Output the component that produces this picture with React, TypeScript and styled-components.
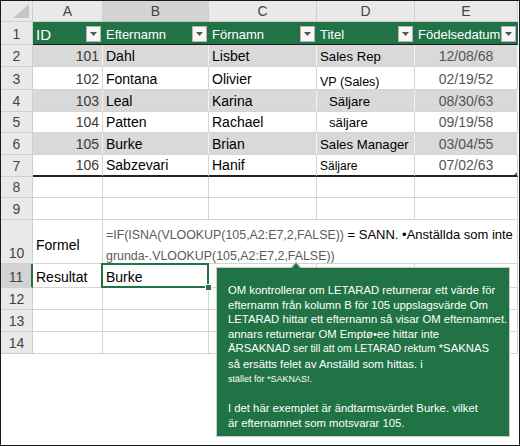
import React from "react";
import styled, { createGlobalStyle } from "styled-components";

const GlobalStyle = createGlobalStyle`
  html, body {
    margin: 0;
    padding: 0;
    background: #fff;
  }
  body {
    font-family: "Liberation Sans", Arial, sans-serif;
  }
`;

const GREEN = "#217346";
const GRID = "#d4d4d4";

const COLUMNS = ["A", "B", "C", "D", "E"];
const ROW_HEIGHTS = [21, 23, 22, 23, 22, 21, 22, 22, 21, 22, 44, 24, 22, 22, 22];

type Person = {
  id: number;
  last: string;
  first: string;
  title: string;
  titleStyle?: "indent" | "small" | "boxed";
  date: string;
};

const people: Person[] = [
  { id: 101, last: "Dahl", first: "Lisbet", title: "Sales Rep", date: "12/08/68" },
  { id: 102, last: "Fontana", first: "Olivier", title: "VP (Sales)", titleStyle: "small", date: "02/19/52" },
  { id: 103, last: "Leal", first: "Karina", title: "Säljare", titleStyle: "indent", date: "08/30/63" },
  { id: 104, last: "Patten", first: "Rachael", title: "säljare", titleStyle: "indent", date: "09/19/58" },
  { id: 105, last: "Burke", first: "Brian", title: "Sales Manager", date: "03/04/55" },
  { id: 106, last: "Sabzevari", first: "Hanif", title: "Säljare", titleStyle: "boxed", date: "07/02/63" },
];

const App = () => {
  return (
    <>
      <GlobalStyle />
      <Frame>
        <Sheet>
          <Corner>
            <svg width="16" height="14" viewBox="0 0 16 14">
              <polygon points="0,14 16,14 16,0" fill="#c6c6c6" />
            </svg>
          </Corner>
          {COLUMNS.map((c) => (
            <ColHead key={c} $selected={c === "B"}>
              {c}
            </ColHead>
          ))}

          <RowHead>1</RowHead>
          {["ID", "Efternamn", "Förnamn", "Titel", "Födelsedatum"].map((h) => (
            <HeadCell key={h}>
              <HeadLabel $bold={h === "ID"}>{h}</HeadLabel>
              <FilterButton>
                <svg width="7" height="4" viewBox="0 0 7 4">
                  <polygon points="0,0 7,0 3.5,4" fill="#555" />
                </svg>
              </FilterButton>
            </HeadCell>
          ))}

          {people.map((p, i) => {
            const banded = i % 2 === 0;
            const last = i === people.length - 1;
            return (
              <React.Fragment key={p.id}>
                <RowHead>{i + 2}</RowHead>
                <Cell $banded={banded} $closing={last} $align="right" $color="#3a3a3a">
                  {p.id}
                </Cell>
                <Cell $banded={banded} $closing={last}>
                  {p.last}
                </Cell>
                <Cell $banded={banded} $closing={last}>
                  {p.first}
                </Cell>
                <Cell $banded={banded} $closing={last}>
                  <Title $variant={p.titleStyle}>{p.title}</Title>
                </Cell>
                <Cell $banded={banded} $closing={last} $align="center" $color="#555">
                  {p.date}
                  {last && <ResizeHandle />}
                </Cell>
              </React.Fragment>
            );
          })}

          {[8, 9].map((n) => (
            <React.Fragment key={n}>
              <RowHead>{n}</RowHead>
              {COLUMNS.map((c) => (
                <Cell key={c} />
              ))}
            </React.Fragment>
          ))}

          <RowHead>10</RowHead>
          <Cell $valign="center">Formel</Cell>
          <FormulaCell>
            <FormulaLine>
              <Code>=IF(ISNA(VLOOKUP(105,A2:E7,2,FALSE))</Code>
              <Plain> = SANN. •Anställda som inte</Plain>
            </FormulaLine>
            <FormulaLine>
              <Code>grunda-.VLOOKUP(105,A2:E7,2,FALSE))</Code>
            </FormulaLine>
          </FormulaCell>

          <RowHead $selected>11</RowHead>
          <Cell>Resultat</Cell>
          <Cell $active>Burke</Cell>
          <Cell />
          <Cell />
          <Cell />

          {[12, 13, 14].map((n) => (
            <React.Fragment key={n}>
              <RowHead>{n}</RowHead>
              {COLUMNS.map((c) => (
                <Cell key={c} />
              ))}
            </React.Fragment>
          ))}
        </Sheet>

        <Callout>
          <CalloutLine>OM kontrollerar om LETARAD returnerar ett värde för</CalloutLine>
          <CalloutLine>efternamn från kolumn B för 105 uppslagsvärde Om</CalloutLine>
          <CalloutLine>LETARAD hittar ett efternamn så visar OM efternamnet.</CalloutLine>
          <CalloutLine>annars returnerar OM Emptø•ee hittar inte</CalloutLine>
          <CalloutLine>
            ÄRSAKNAD <Small $size={10.3}>ser till att om LETARAD rektum</Small> *SAKNAS
          </CalloutLine>
          <CalloutLine>så ersätts felet av Anställd som hittas. i</CalloutLine>
          <CalloutLine>
            <Small $size={9}>stället för *SAKNAS!.</Small>
          </CalloutLine>
          <CalloutLine>&nbsp;</CalloutLine>
          <CalloutLine>I det här exemplet är ändtarmsvärdet Burke. vilket</CalloutLine>
          <CalloutLine>är efternamnet som motsvarar 105.</CalloutLine>
        </Callout>
      </Frame>
    </>
  );
};

const Frame = styled.div`
  position: relative;
  width: 520px;
  height: 446px;
  box-sizing: border-box;
  border: 1px solid #1a1a1a;
  background: #fff;
  overflow: hidden;
`;

const Sheet = styled.div`
  display: grid;
  grid-template-columns: 32px 70px 106px 108px 98px 103px;
  grid-template-rows: ${ROW_HEIGHTS.map((h) => `${h}px`).join(" ")};
  font-size: 14px;
  color: #000;
`;

const Corner = styled.div`
  display: flex;
  align-items: flex-end;
  justify-content: flex-end;
  padding: 0 3px 3px 0;
  background: #e9e9e9;
  border-right: 1px solid #cfcfcf;
  border-bottom: 1px solid #cfcfcf;
  box-sizing: border-box;
`;

const ColHead = styled.div<{ $selected?: boolean }>`
  display: flex;
  align-items: center;
  justify-content: center;
  background: ${({ $selected }) => ($selected ? "#d3d3d3" : "#e9e9e9")};
  color: #444;
  font-size: 14px;
  border-right: 1px solid #cfcfcf;
  border-bottom: 1px solid ${({ $selected }) => ($selected ? "#bdbdbd" : "#cfcfcf")};
  box-sizing: border-box;
`;

const RowHead = styled.div<{ $selected?: boolean }>`
  display: flex;
  align-items: flex-end;
  justify-content: center;
  padding-bottom: 2px;
  background: ${({ $selected }) => ($selected ? "#d3d3d3" : "#e9e9e9")};
  color: #444;
  font-size: 14px;
  border-right: ${({ $selected }) => ($selected ? `2px solid ${GREEN}` : "1px solid #cfcfcf")};
  border-bottom: 1px solid #cfcfcf;
  box-sizing: border-box;
`;

const HeadCell = styled.div`
  display: flex;
  align-items: center;
  justify-content: space-between;
  gap: 1px;
  padding: 0 2px 0 3px;
  background: ${GREEN};
  color: #fff;
  border-bottom: 1px solid #1c1c1c;
  box-sizing: border-box;
  overflow: hidden;
`;

const HeadLabel = styled.span<{ $bold?: boolean }>`
  font-size: ${({ $bold }) => ($bold ? "15px" : "13px")};
  white-space: nowrap;
  padding-top: 2px;
`;

const FilterButton = styled.span`
  flex: none;
  display: flex;
  align-items: center;
  justify-content: center;
  width: 15px;
  height: 16px;
  margin-top: 2px;
  background: #f7f7f7;
  border: 1px solid #b4b4b4;
  box-sizing: border-box;
`;

const Cell = styled.div<{
  $banded?: boolean;
  $closing?: boolean;
  $align?: "left" | "right" | "center";
  $color?: string;
  $valign?: "center" | "end";
  $active?: boolean;
}>`
  position: relative;
  display: flex;
  align-items: ${({ $valign }) => ($valign === "center" ? "center" : "flex-end")};
  justify-content: ${({ $align }) =>
    $align === "right" ? "flex-end" : $align === "center" ? "center" : "flex-start"};
  padding: ${({ $valign }) => ($valign === "center" ? "6px 3px 0 3px" : "0 3px 2px 3px")};
  background: ${({ $banded }) => ($banded ? "#d9d9d9" : "#fff")};
  color: ${({ $color }) => $color || "#000"};
  border-right: 1px solid ${({ $banded }) => ($banded ? "#f2f2f2" : GRID)};
  border-bottom: ${({ $closing }) => ($closing ? "2px solid #222" : `1px solid ${GRID}`)};
  box-sizing: border-box;
  white-space: nowrap;

  ${({ $active }) =>
    $active &&
    `
    &::after {
      content: "";
      position: absolute;
      inset: -1px -1px -1px -2px;
      border: 2px solid ${GREEN};
    }
    &::before {
      content: "";
      position: absolute;
      right: -4px;
      bottom: -4px;
      width: 5px;
      height: 5px;
      background: ${GREEN};
      border: 1px solid #fff;
      z-index: 1;
    }
  `}
`;

const Title = styled.span<{ $variant?: "indent" | "small" | "boxed" }>`
  padding-left: ${({ $variant }) => ($variant === "indent" ? "9px" : "0")};
  font-size: ${({ $variant }) =>
    $variant === "boxed" ? "12px" : $variant === "small" ? "12.5px" : "13.2px"};
  background: ${({ $variant }) => ($variant === "boxed" ? "#fff" : "transparent")};
  padding-right: ${({ $variant }) => ($variant === "boxed" ? "16px" : "0")};
  margin-bottom: ${({ $variant }) => ($variant === "small" ? "-2px" : "0")};
`;

const ResizeHandle = styled.span`
  position: absolute;
  right: 0;
  bottom: 0;
  width: 0;
  height: 0;
  border-left: 3px solid transparent;
  border-bottom: 3px solid #3b5fbf;
`;

const FormulaCell = styled.div`
  grid-column: span 4;
  display: flex;
  flex-direction: column;
  justify-content: flex-start;
  gap: 6px;
  padding: 7px 3px 0 3px;
  border-bottom: 1px solid ${GRID};
  border-right: 1px solid ${GRID};
  box-sizing: border-box;
  white-space: nowrap;
`;

const FormulaLine = styled.div`
  line-height: 14px;
`;

const Code = styled.span`
  font-size: 12.4px;
  color: #5b5b5b;
`;

const Plain = styled.span`
  font-size: 13px;
  color: #000;
`;

const Callout = styled.div`
  position: absolute;
  left: 215px;
  top: 266px;
  width: 294px;
  height: 170px;
  box-sizing: border-box;
  padding: 15px 6px 0 11px;
  background: ${GREEN};
  border: 1px solid #c9c9c9;
  color: #fff;
  font-size: 11.3px;

  &::before {
    content: "";
    position: absolute;
    left: 73px;
    top: -7px;
    border-left: 6px solid transparent;
    border-right: 6px solid transparent;
    border-bottom: 7px solid #c9c9c9;
  }
  &::after {
    content: "";
    position: absolute;
    left: 74px;
    top: -5px;
    border-left: 5px solid transparent;
    border-right: 5px solid transparent;
    border-bottom: 6px solid ${GREEN};
  }
`;

const CalloutLine = styled.div`
  line-height: 14.5px;
  white-space: nowrap;
`;

const Small = styled.span<{ $size: number }>`
  font-size: ${({ $size }) => $size}px;
`;

export default App;
